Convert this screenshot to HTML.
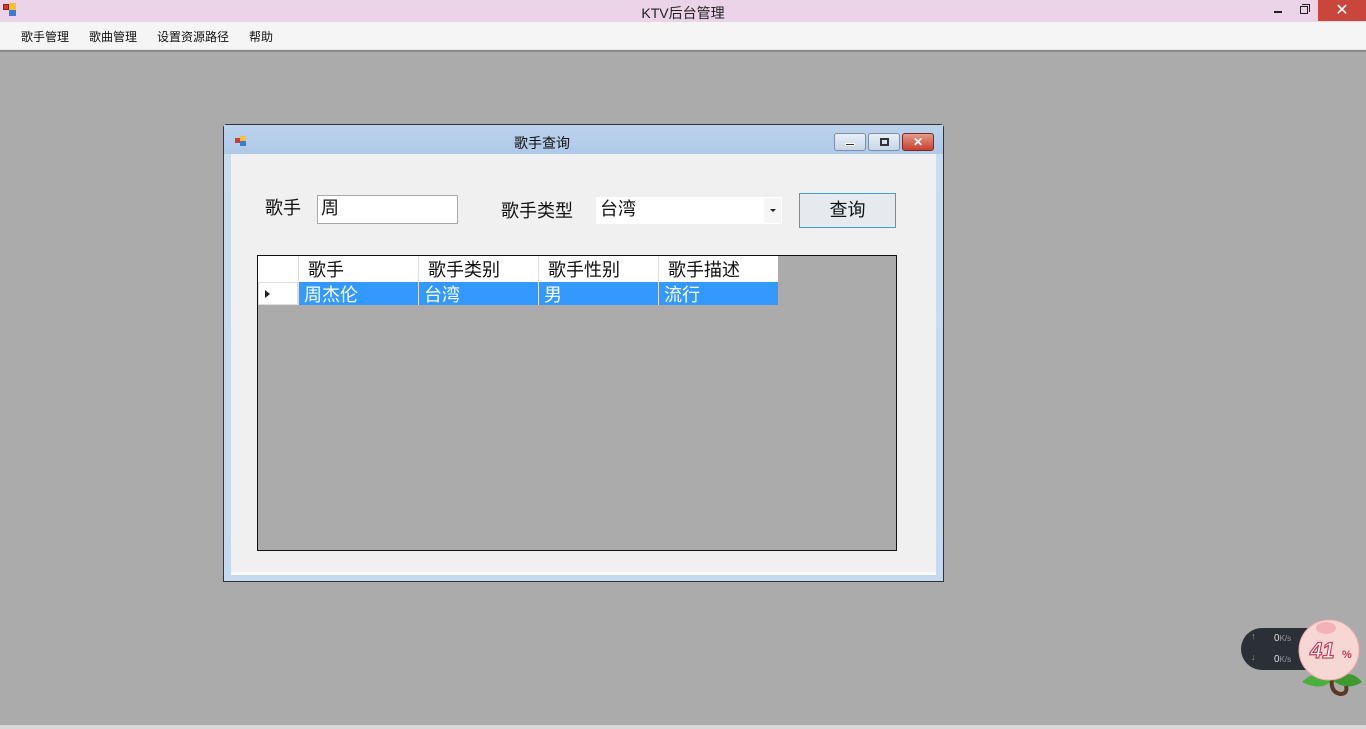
<!DOCTYPE html>
<html><head><meta charset="utf-8"><style>
*{margin:0;padding:0;box-sizing:border-box}
body{width:1366px;height:729px;overflow:hidden;background:#ababab;font-family:"Liberation Sans","Noto Sans CJK SC",sans-serif;position:relative}
.a{position:absolute}
</style></head><body>
<div class="a" style="left:0;top:0;width:1366px;height:22px;background:#ebd3e8"></div>
<div class="a" style="left:3px;top:4px;width:6px;height:6px;background:#d33;border:1px solid #822"></div>
<div class="a" style="left:9px;top:3px;width:7px;height:7px;background:#f2c230"></div>
<div class="a" style="left:9px;top:10px;width:7px;height:6px;background:#3a7bd5"></div>
<div class="a" style="left:0;top:3px;width:1366px;text-align:center;font-size:14px;color:#222">KTV后台管理</div>
<div class="a" style="left:1274px;top:11px;width:8px;height:2px;background:#222"></div>
<div class="a" style="left:1300px;top:6px;width:8px;height:8px;border:1.5px solid #222"></div>
<div class="a" style="left:1302px;top:4px;width:8px;height:8px;border-top:1.5px solid #222;border-right:1.5px solid #222"></div>
<div class="a" style="left:1318px;top:0;width:48px;height:21px;background:#c9463d;color:#fff;text-align:center;font-size:16px;line-height:21px">✕</div>
<div class="a" style="left:0;top:22px;width:1366px;height:28px;background:#f5f5f5;border-bottom:1px solid #e6e6e6"></div>
<div class="a" style="left:0;top:50px;width:1366px;height:2px;background:#8a8a8a"></div>
<div class="a" style="left:21px;top:28px;font-size:12px;color:#111">歌手管理</div>
<div class="a" style="left:89px;top:28px;font-size:12px;color:#111">歌曲管理</div>
<div class="a" style="left:157px;top:28px;font-size:12px;color:#111">设置资源路径</div>
<div class="a" style="left:249px;top:28px;font-size:12px;color:#111">帮助</div>
<div class="a" style="left:0;top:725px;width:1366px;height:4px;background:#d8d8d8"></div>
<div class="a" style="left:223px;top:124px;width:721px;height:458px;border:1px solid #333;border-radius:4px 4px 0 0;background:linear-gradient(#b8d1ec,#c9dcf0 30px,#c5daf0);"></div>
<div class="a" style="left:224px;top:125px;width:719px;height:29px;background:linear-gradient(#bcd3ec,#aec9e8)"></div>
<div class="a" style="left:235px;top:138px;width:5px;height:5px;background:#d33"></div>
<div class="a" style="left:240px;top:136px;width:6px;height:5px;background:#f2c230"></div>
<div class="a" style="left:240px;top:141px;width:6px;height:5px;background:#3a7bd5"></div>
<div class="a" style="left:224px;top:133px;width:636px;text-align:center;font-size:14px;color:#111">歌手查询</div>
<div class="a" style="left:834px;top:133px;width:32px;height:18px;border:1px solid #7f8fa6;border-radius:3px;background:linear-gradient(#e8eff8,#c6d5e8)"><div style="margin:9px auto 0;width:10px;height:3px;background:#333;border:1px solid #fff"></div></div>
<div class="a" style="left:868px;top:133px;width:32px;height:18px;border:1px solid #7f8fa6;border-radius:3px;background:linear-gradient(#e8eff8,#c6d5e8)"><div style="margin:4px auto 0;width:9px;height:8px;border:2px solid #333"></div></div>
<div class="a" style="left:902px;top:133px;width:32px;height:18px;border:1px solid #7a2a22;border-radius:3px;background:linear-gradient(#e49a8a,#c8412d);color:#fff;text-align:center;font-size:12px;line-height:16px;font-weight:bold">✕</div>
<div class="a" style="left:231px;top:154px;width:705px;height:421px;background:#f0f0f0;border-bottom:3px solid #fafafa"></div>
<div class="a" style="left:265px;top:194px;font-size:18px;color:#111">歌手</div>
<div class="a" style="left:317px;top:195px;width:141px;height:29px;background:#fff;border:1px solid #aaa;font-size:18px;padding:0 3px;color:#111;line-height:24px">周</div>
<div class="a" style="left:501px;top:197px;font-size:18px;color:#111">歌手类型</div>
<div class="a" style="left:596px;top:197px;width:186px;height:27px;background:#fff;font-size:18px;padding:0 4px;color:#111;line-height:24px">台湾</div>
<div class="a" style="left:764px;top:198px;width:17px;height:25px;background:#f6f6f6"></div>
<div class="a" style="left:770px;top:209px;border-left:3px solid transparent;border-right:3px solid transparent;border-top:3px solid #222"></div>
<div class="a" style="left:799px;top:193px;width:97px;height:35px;border:1px solid #3c9fe0;background:#e6eaee;text-align:center;font-size:18px;line-height:32px;color:#111">查询</div>
<div class="a" style="left:257px;top:255px;width:640px;height:296px;background:#ababab;border:1px solid #111"></div>
<div class="a" style="left:258px;top:256px;width:520px;height:26px;background:#fff"></div>
<div class="a" style="left:258px;top:282px;width:40px;height:23px;background:#fff;border:1px solid #ddd"></div>
<div class="a" style="left:265px;top:290px;border-top:4px solid transparent;border-bottom:4px solid transparent;border-left:5px solid #222"></div>
<div class="a" style="left:298px;top:282px;width:480px;height:23px;background:#3399ff"></div>
<div class="a" style="left:298px;top:256px;width:1px;height:49px;background:#ddd"></div>
<div class="a" style="left:418px;top:256px;width:1px;height:49px;background:#e0e0e0"></div>
<div class="a" style="left:538px;top:256px;width:1px;height:49px;background:#e0e0e0"></div>
<div class="a" style="left:658px;top:256px;width:1px;height:49px;background:#e0e0e0"></div>
<div class="a" style="left:308px;top:256px;font-size:18px;color:#111">歌手</div>
<div class="a" style="left:428px;top:256px;font-size:18px;color:#111">歌手类别</div>
<div class="a" style="left:548px;top:256px;font-size:18px;color:#111">歌手性别</div>
<div class="a" style="left:668px;top:256px;font-size:18px;color:#111">歌手描述</div>
<div class="a" style="left:304px;top:281px;font-size:18px;color:#fff">周杰伦</div>
<div class="a" style="left:424px;top:281px;font-size:18px;color:#fff">台湾</div>
<div class="a" style="left:544px;top:281px;font-size:18px;color:#fff">男</div>
<div class="a" style="left:664px;top:281px;font-size:18px;color:#fff">流行</div>
<div class="a" style="left:1241px;top:628px;width:90px;height:42px;background:#2b2f36;border-radius:21px"></div>
<div class="a" style="left:1251px;top:631px;font-size:9px;color:#5aa8e8">↑</div>
<div class="a" style="left:1251px;top:652px;font-size:9px;color:#5bb55b">↓</div>
<div class="a" style="left:1274px;top:633px;font-size:10px;color:#ddd">0<span style="font-size:8px;color:#999">K/s</span></div>
<div class="a" style="left:1274px;top:654px;font-size:10px;color:#ddd">0<span style="font-size:8px;color:#999">K/s</span></div>
<svg class="a" style="left:1292px;top:612px" width="74" height="90">
<path d="M10 70 Q25 55 40 68 Q30 80 10 70Z" fill="#4caf3a"/>
<path d="M40 68 Q58 55 70 70 Q55 80 40 68Z" fill="#3e9a2e"/>
<path d="M40 66 Q38 80 48 82 Q56 82 54 74" stroke="#5a3a24" stroke-width="4" fill="none"/>
<circle cx="37" cy="38" r="30" fill="#f7d7d4" stroke="#e9b0ae"/>
<ellipse cx="34" cy="16" rx="10" ry="6" fill="#f2b2b8"/>
<text x="18" y="46" font-size="22" font-style="italic" font-weight="bold" fill="#fff" stroke="#c2405a" stroke-width="1.2" font-family="Liberation Sans">41</text>
<text x="50" y="46" font-size="11" font-weight="bold" fill="#c2405a" font-family="Liberation Sans">%</text>
</svg>
</body></html>
